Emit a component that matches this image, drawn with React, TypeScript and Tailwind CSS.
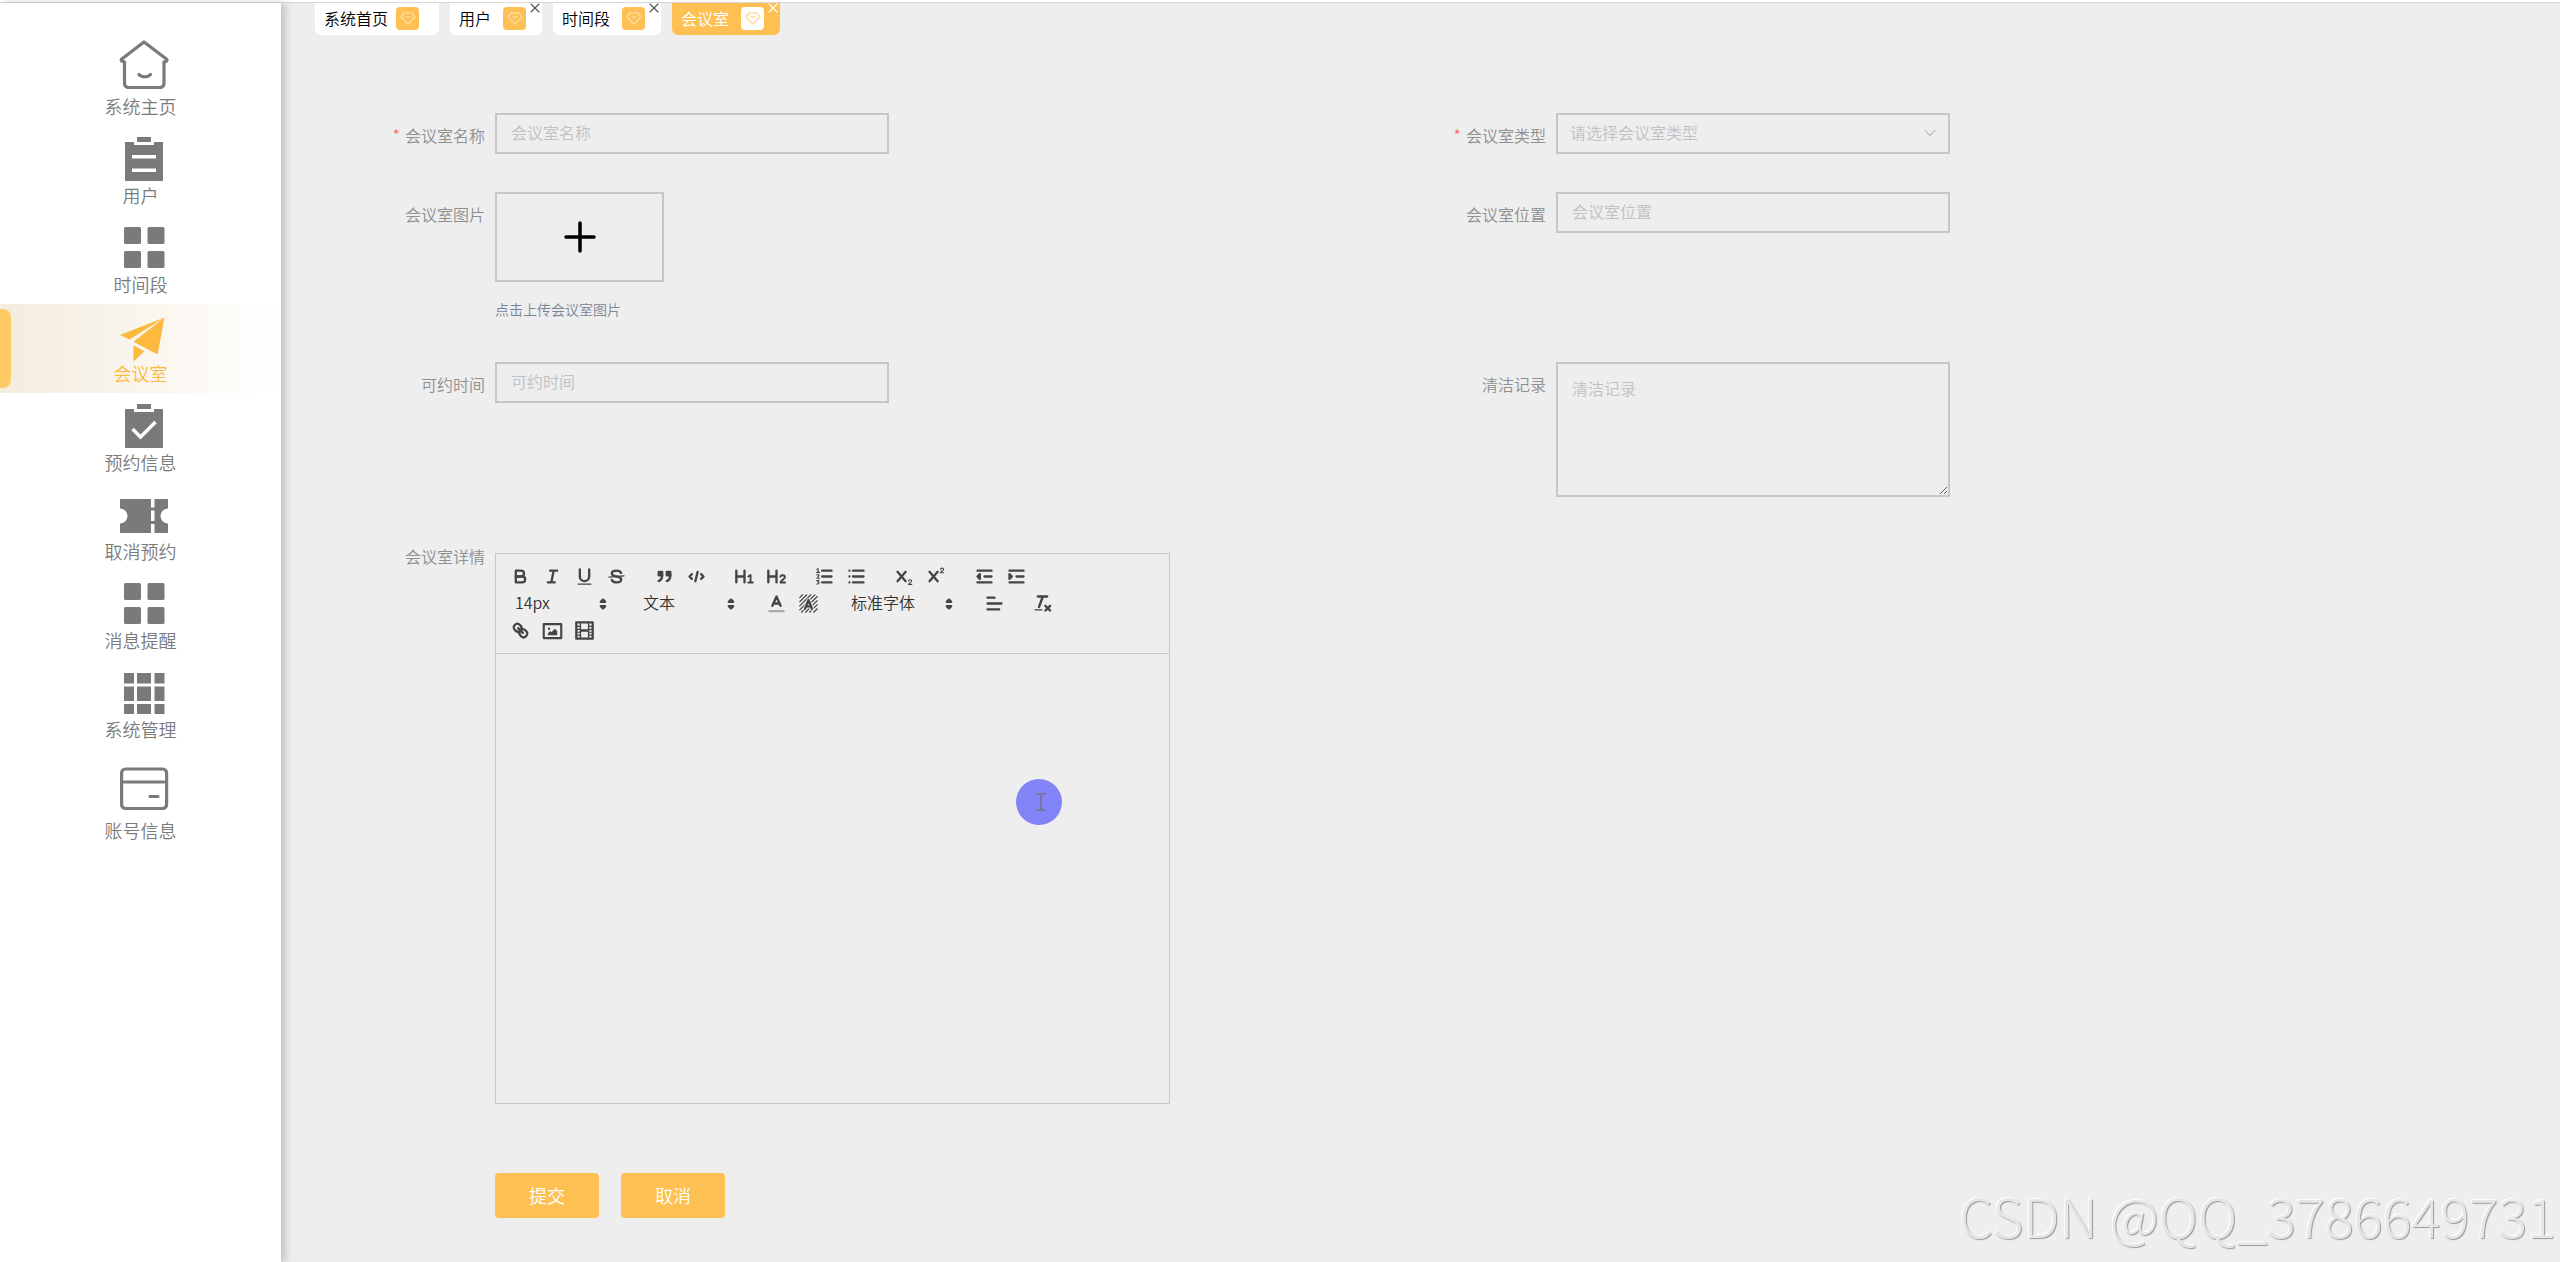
import type { ReactNode } from "react";
import { ChevronDown, X } from "lucide-react";
import clsx from "clsx";

type IconProps = {
  className?: string;
};

type MenuEntry = {
  label: string;
  icon: (props: IconProps) => ReactNode;
  active?: boolean;
  outlined?: boolean;
};

type TabEntry = {
  label: string;
  closable?: boolean;
  active?: boolean;
};

function MenuSvg({ className, children }: { className?: string; children: ReactNode }) {
  return (
    <svg viewBox="0 0 51 51" fill="currentColor" className={className} aria-hidden="true">
      {children}
    </svg>
  );
}

const HomeIcon = ({ className }: IconProps) => (
  <MenuSvg className={className}>
    <g fill="none" stroke="currentColor" strokeWidth="3.2" strokeLinecap="round" strokeLinejoin="round">
      <path d="M25 4 2.800 21c-1.200 1.200-.4 2.800 2.700 2.800V45.500a4 4 0 0 0 4 4h31.500a4 4 0 0 0 4-4V23.800c3 0 3.600-1.600 2.400-2.800Z" />
      <path d="M20 36.500c2.500 3 9 3 11.500 0" />
    </g>
  </MenuSvg>
);

const ClipboardIcon = ({ className }: IconProps) => (
  <MenuSvg className={className}>
    <path d="M18 4h14v5H18z" />
    <path fillRule="evenodd" d="M6 9h9v3h20V9h9v39H6ZM13 22v3.500h24V22ZM13 35.500V39h24v-3.500Z" />
  </MenuSvg>
);

const ClipboardCheckIcon = ({ className }: IconProps) => (
  <MenuSvg className={className}>
    <path d="M18 4h14v5H18z" />
    <path d="M6 9h9v3h20V9h9v39H6Z" />
    <path d="M13.500 29 21.500 37 36.500 22" fill="none" stroke="#fff" strokeWidth="3.4" />
  </MenuSvg>
);

const GridIcon = ({ className }: IconProps) => (
  <MenuSvg className={className}>
    <rect x="5" y="5" width="17" height="17" rx="1.5" />
    <rect x="28.500" y="5" width="17" height="17" rx="1.5" />
    <rect x="5" y="29" width="17" height="17" rx="1.5" />
    <rect x="28.500" y="29" width="17" height="17" rx="1.5" />
  </MenuSvg>
);

const PlaneIcon = ({ className }: IconProps) => (
  <MenuSvg className={className}>
    <path d="M1 24 45.500 6.500 10.500 28.500Z" />
    <path d="M45.500 6.500 38.500 43.500 14.500 30.800Z" />
    <path d="M14.500 34.500 25.500 40.300 14.500 50.500Z" />
  </MenuSvg>
);

const TicketIcon = ({ className }: IconProps) => (
  <MenuSvg className={className}>
    <path d="M1 10h31v34H1V34.500a7.500 7.500 0 0 0 0-15ZM35.500 10H49v9.500a7.500 7.500 0 0 0 0 15V44H35.500Z" />
    <path d="M31 18.500h6v3h-6zM31 32h6v3h-6z" />
  </MenuSvg>
);

const NineGridIcon = ({ className }: IconProps) => (
  <MenuSvg className={className}>
    <path d="M5 6h10v10.500H5zM18 6h14v10.500H18zM35.500 6h10v10.500h-10z" />
    <path d="M5 19.500h10V34H5zM18 19.500h14V34H18zM35.500 19.500h10V34h-10z" />
    <path d="M5 37h10v10H5zM18 37h14v10H18zM35.500 37h10v10h-10z" />
  </MenuSvg>
);

const CardIcon = ({ className }: IconProps) => (
  <MenuSvg className={className}>
    <g fill="none" stroke="currentColor" strokeWidth="3.2" strokeLinecap="round">
      <rect x="2.600" y="7" width="45" height="39.500" rx="4" />
      <path d="M5 20h40M31 34.500h8" />
    </g>
  </MenuSvg>
);

const menu: MenuEntry[] = [
  { label: "系统主页", icon: HomeIcon, outlined: true },
  { label: "用户", icon: ClipboardIcon },
  { label: "时间段", icon: GridIcon },
  { label: "会议室", icon: PlaneIcon, active: true },
  { label: "预约信息", icon: ClipboardCheckIcon },
  { label: "取消预约", icon: TicketIcon },
  { label: "消息提醒", icon: GridIcon },
  { label: "系统管理", icon: NineGridIcon },
  { label: "账号信息", icon: CardIcon, outlined: true },
];

const tabs: TabEntry[] = [
  { label: "系统首页" },
  { label: "用户", closable: true },
  { label: "时间段", closable: true },
  { label: "会议室", closable: true, active: true },
];

function Sidebar() {
  return (
    <nav className="relative z-10 flex w-[281px] shrink-0 flex-col bg-white pt-7 shadow-[4px_0_8px_rgba(0,0,0,0.2)]">
      {menu.map(({ label, icon: Icon, active, outlined }) => (
        <a
          key={label}
          href="#"
          className={clsx(
            "relative flex flex-col items-center pt-[7px] pb-[9px] text-lg leading-[22px] last:mt-[6px]",
            active ? "bg-linear-to-r from-[#f4ecdd] to-white text-[#fdb83e]" : "text-[#7a7a7a]"
          )}
        >
          {active && <span className="absolute inset-y-[5px] left-0 w-[11px] rounded-r-lg bg-[#ffcb66]" />}
          <Icon className={clsx("ml-[7px] size-[51px]", outlined && "mb-[6px]")} />
          <span>{label}</span>
        </a>
      ))}
    </nav>
  );
}

function Tabs() {
  return (
    <div className="flex gap-[11px] pl-[34px]">
      {tabs.map(({ label, closable, active }) => (
        <div
          key={label}
          className={clsx(
            "relative flex h-8 items-center rounded-b-md pb-[2px] pl-[9px]",
            closable ? "gap-3 pr-4" : "gap-2 pr-5",
            active ? "bg-[#ffc053] text-white" : "bg-white text-black"
          )}
        >
          <a href="#">{label}</a>
          <span
            className={clsx(
              "flex size-[23px] items-center justify-center rounded-sm",
              active ? "bg-white text-[#ffdb9c]" : "bg-[#ffc053] text-[#ffdb9c]"
            )}
          >
            <svg viewBox="0 0 16 16" className="size-4" fill="none" stroke="currentColor" strokeWidth="1.5" strokeLinejoin="round" aria-hidden="true">
              <path d="M4 3h8l3 4-7 7-7-7ZM5.500 7h5" />
            </svg>
          </span>
          {closable && (
            <button type="button" aria-label="关闭" className={clsx("absolute -top-[3px] -right-px", active ? "text-white" : "text-[#555]")}>
              <X className="size-4" strokeWidth={1.75} />
            </button>
          )}
        </div>
      ))}
    </div>
  );
}

type FieldProps = {
  id: string;
  label: string;
  required?: boolean;
  compact?: boolean;
  children: ReactNode;
};

function Field({ id, label, required, compact, children }: FieldProps) {
  return (
    <div className="flex items-start">
      <label
        htmlFor={id}
        className={clsx("w-[150px] shrink-0 pr-[10px] text-right text-[#8f8f8f]", compact ? "leading-[6px]" : "leading-[44px]")}
      >
        {required && <span className="mr-[5px] text-[#f56c6c]">*</span>}
        {label}
      </label>
      {children}
    </div>
  );
}

const control = "block w-[394px] border-2 border-[#c6c6c6] bg-transparent outline-none placeholder:text-[#bfc1c6]";

// Toolbar glyphs are drawn on an 18 unit grid with 2 unit strokes.
const glyphs: Record<string, ReactNode> = {
  加粗: (
    <>
      <path d="M5 4h4.500a2.500 2.500 0 0 1 0 5H5Z" />
      <path d="M5 9h5.500a2.500 2.500 0 0 1 0 5H5Z" />
    </>
  ),
  斜体: <path d="M7 4h6M5 14h6M8 14l2-10" />,
  下划线: (
    <>
      <path d="M5 3v6a4 4 0 0 0 8 0V3" />
      <path d="M3.500 15.500h11" strokeWidth="1" />
    </>
  ),
  删除线: (
    <>
      <path d="M13 6c-.5-1.300-2.200-2-4-2-2.300 0-4 1.100-4 2.500S6 8.600 9 9s4 1.100 4 2.500S11.300 14 9 14c-1.800 0-3.500-.7-4-2" />
      <path d="M2.500 9.500l13-1" strokeWidth="1" />
    </>
  ),
  引用: (
    <g fill="currentColor">
      <path d="M4 5h3v3H4zM11 5h3v3h-3z" />
      <path d="M7 8c0 4-3 5-3 5M14 8c0 4-3 5-3 5" />
    </g>
  ),
  代码: <path d="M5 7 3 9l2 2M13 7l2 2-2 2M10 5 8 13" />,
  标题1: (
    <>
      <path d="M2 4v10M9 4v10M2 9h7" />
      <path d="M12.300 9l1.900-1.200v6.200M12.200 14.100h4" strokeWidth="1.600" />
    </>
  ),
  标题2: (
    <>
      <path d="M2 4v10M9 4v10M2 9h7" />
      <path d="M12.300 9.300c.5-2 3.900-1.800 3.900.3 0 1.500-3.600 2.700-3.800 4.500h4" strokeWidth="1.600" />
    </>
  ),
  有序列表: (
    <>
      <path d="M7 4h8M7 9h8M7 14h8" />
      <path d="M2.500 2.800l1-.4v3M2.300 5.500h2.400M2.400 7.700c.8-.9 2.200-.2 1.700.8L2.500 10.500h2.200M2.400 12.500h1.900l-1 1.200c1.600 0 1.500 2-.9 1.700" strokeWidth="1" />
    </>
  ),
  无序列表: <path d="M6 4h9M6 9h9M6 14h9M3 4h0M3 9h0M3 14h0" />,
  下标: (
    <>
      <path d="M3 5l7 8M10 5l-7 8" />
      <path d="M12.400 12.800c.4-1.500 2.700-1.300 2.600.1 0 1-2.500 1.700-2.600 2.900h2.800" strokeWidth="1" />
    </>
  ),
  上标: (
    <>
      <path d="M3 5l7 8M10 5l-7 8" />
      <path d="M12.400 2.800c.4-1.500 2.700-1.300 2.600.1 0 1-2.500 1.700-2.600 2.900h2.800" strokeWidth="1" />
    </>
  ),
  减少缩进: (
    <>
      <path d="M3 4h12M3 14h12M9 9h6" />
      <path d="M5 7v4L3 9Z" fill="currentColor" />
    </>
  ),
  增加缩进: (
    <>
      <path d="M3 4h12M3 14h12M9 9h6" />
      <path d="M3 7v4l2-2Z" fill="currentColor" />
    </>
  ),
  文字颜色: (
    <>
      <path d="M5.500 11 9 3l3.500 8M6.400 9h5.200" />
      <path d="M3 15.500h12" stroke="#aaa" />
    </>
  ),
  背景颜色: (
    <>
      <path d="M1.500 4l2.500-2.500M1.500 7.500l6-6M1.500 11l9.500-9.500M1.500 14.500l13-13M3 16.500 16.500 3M6.500 16.500l10-10M10 16.500l6.500-6.500M13.500 16.500l3-3" strokeWidth="1" />
      <path d="M6 13.500 9 6l3 7.500M6.800 11.500h4.400" stroke="#ededed" strokeWidth="3.500" />
      <path d="M6 13.500 9 6l3 7.500M6.800 11.500h4.400" />
    </>
  ),
  对齐: <path d="M3 4h6M3 9h12M3 14h10" />,
  清除格式: (
    <>
      <path d="M5 3h8M6 12l3.300-9M11.500 11l4 4M15.500 11l-4 4" />
      <path d="M2.500 14.500h6" strokeWidth="1" />
    </>
  ),
  链接: (
    <>
      <path d="M7 7l4 4" />
      <path d="M8.900 4.577a3.476 3.476 0 0 1 .36 4.679A3.476 3.476 0 0 1 4.577 8.900C3.185 7.500 2.035 6.400 4.217 4.217S7.500 3.185 8.900 4.577Z" />
      <path d="M13.423 9.100a3.476 3.476 0 0 0-4.679-.36 3.476 3.476 0 0 0 .36 4.679c1.392 1.392 2.500 2.542 4.679.36S14.815 10.500 13.423 9.100Z" />
    </>
  ),
  图片: (
    <>
      <rect x="1.500" y="3.500" width="15" height="12" strokeWidth="1.800" />
      <circle cx="6" cy="7.500" r="1" fill="currentColor" stroke="none" />
      <path d="M5 13v-1.500l2-2 1 1 3-3 2 2V13Z" fill="currentColor" stroke="none" />
    </>
  ),
  视频: (
    <>
      <rect x="2" y="2" width="14" height="14" />
      <path d="M5.500 3v12M12.500 3v12" strokeWidth="1.200" />
      <path d="M6 9h6" />
      <path d="M3 5.500h2M3 8h2M3 10.500h2M3 13h2M13 5.500h2M13 8h2M13 10.500h2M13 13h2" strokeWidth="1" />
    </>
  ),
};

function ToolButton({ name }: { name: string }) {
  return (
    <button type="button" title={name} aria-label={name} className="flex h-[27px] w-8 items-center justify-center">
      <svg viewBox="0 0 18 18" className="size-[21px]" fill="none" stroke="currentColor" strokeWidth="2" strokeLinecap="round" strokeLinejoin="round" aria-hidden="true">
        {glyphs[name]}
      </svg>
    </button>
  );
}

function ToolPicker({ name, value, wide }: { name: string; value: string; wide?: boolean }) {
  return (
    <div className={clsx("relative mr-4 h-[27px]", wide ? "w-[122px]" : "w-28")}>
      <select aria-label={name} className="block h-6 w-full appearance-none bg-transparent pl-[11px] text-[#333] outline-none">
        <option>{value}</option>
      </select>
      <svg viewBox="0 0 18 18" className="pointer-events-none absolute top-[4px] right-[3px] size-5" fill="currentColor" stroke="currentColor" strokeWidth="2" strokeLinejoin="round" aria-hidden="true">
        <path d="M7 11l2 2 2-2ZM7 7l2-2 2 2Z" />
      </svg>
    </div>
  );
}

function ToolGroup({ names }: { names: string[] }) {
  return (
    <div className="mr-4 flex">
      {names.map((name) => (
        <ToolButton key={name} name={name} />
      ))}
    </div>
  );
}

function Editor() {
  return (
    <div className="w-[675px] border border-[#c8c8c8]">
      <div className="flex flex-wrap border-b border-[#c8c8c8] py-[9px] pr-[9px] pl-2 text-[#444]">
        <ToolGroup names={["加粗", "斜体", "下划线", "删除线"]} />
        <ToolGroup names={["引用", "代码"]} />
        <ToolGroup names={["标题1", "标题2"]} />
        <ToolGroup names={["有序列表", "无序列表"]} />
        <ToolGroup names={["下标", "上标"]} />
        <ToolGroup names={["减少缩进", "增加缩进"]} />
        <ToolPicker name="字号" value="14px" />
        <ToolPicker name="标题" value="文本" />
        <ToolGroup names={["文字颜色", "背景颜色"]} />
        <ToolPicker name="字体" value="标准字体" wide />
        <ToolGroup names={["对齐"]} />
        <ToolGroup names={["清除格式"]} />
        <ToolGroup names={["链接", "图片", "视频"]} />
      </div>
      <div className="relative">
        <textarea id="detail" className="block h-[449px] w-full resize-none bg-transparent p-4 outline-none" />
        {/* pointer highlight */}
        <span className="pointer-events-none absolute top-[125px] left-[520px] flex size-[46px] items-center justify-center rounded-full bg-[#8383f8]">
          <svg viewBox="0 0 12 18" className="ml-1 h-[18px] w-3" fill="none" stroke="#77738c" strokeWidth="1.500" aria-hidden="true">
            <path d="M1 1h10M1 17h10M6 1v16" />
          </svg>
        </span>
      </div>
    </div>
  );
}

function RoomForm() {
  return (
    <form className="pt-[78px] pr-[93px] pl-16">
      <div className="grid grid-cols-2 gap-y-[35px]">
        <Field id="name" label="会议室名称" required>
          <input id="name" placeholder="会议室名称" className={clsx(control, "h-[41px] px-[14px] pb-1")} />
        </Field>
        <Field id="type" label="会议室类型" required>
          <div className="relative">
            <select id="type" className={clsx(control, "h-[41px] appearance-none px-3 pb-1 text-[#bfc1c6]")}>
              <option>请选择会议室类型</option>
            </select>
            <ChevronDown className="pointer-events-none absolute top-[10px] right-[10px] size-5 text-[#bfc1c6]" strokeWidth={1.5} />
          </div>
        </Field>
        <Field id="picture" label="会议室图片">
          <div className="pb-1">
            <button id="picture" type="button" aria-label="上传会议室图片" className="flex h-[90px] w-[169px] items-center justify-center border-2 border-[#c6c6c6] text-black">
              <svg viewBox="0 0 32 32" className="size-8" fill="none" stroke="currentColor" strokeWidth="3.500" strokeLinecap="round" aria-hidden="true">
                <path d="M16 2v28M2 16h28" />
              </svg>
            </button>
            <p className="mt-[13px] text-sm leading-7 text-[#7c8494]">点击上传会议室图片</p>
          </div>
        </Field>
        <Field id="place" label="会议室位置">
          <input id="place" placeholder="会议室位置" className={clsx(control, "h-[41px] px-[14px] pb-1")} />
        </Field>
        <Field id="time" label="可约时间">
          <input id="time" placeholder="可约时间" className={clsx(control, "h-[41px] px-[14px] pb-1")} />
        </Field>
        <Field id="clean" label="清洁记录">
          <textarea id="clean" placeholder="清洁记录" className={clsx(control, "h-[135px] px-[14px] py-3")} />
        </Field>
      </div>
      <div className="mt-14">
        <Field id="detail" label="会议室详情" compact>
          <Editor />
        </Field>
      </div>
      <div className="mt-[69px] flex gap-[22px] pb-[45px] pl-[150px] text-lg leading-6 text-white">
        <button type="submit" className="h-[45px] w-[104px] rounded bg-[#ffc053] pb-[2px]">
          提交
        </button>
        <button type="button" className="h-[45px] w-[104px] rounded bg-[#ffc053] pb-[2px]">
          取消
        </button>
      </div>
    </form>
  );
}

export default function App() {
  return (
    <div className="flex min-h-screen flex-col bg-[#eeeeee] font-['Noto_Sans_CJK_SC',sans-serif] text-base font-[350]">
      <div className="h-[3px] border-b border-[#d8d8d8] bg-white" />
      <div className="flex flex-1">
        <Sidebar />
        <main className="min-w-0 flex-1">
          <Tabs />
          <RoomForm />
        </main>
      </div>
      <div className="pointer-events-none fixed right-1 bottom-[14px] text-[54px] leading-[66px] font-light text-[#e6e6e6] [text-shadow:1px_1px_1px_#999,-1px_-1px_1px_#fff]">
        CSDN @QQ_3786649731
      </div>
    </div>
  );
}
